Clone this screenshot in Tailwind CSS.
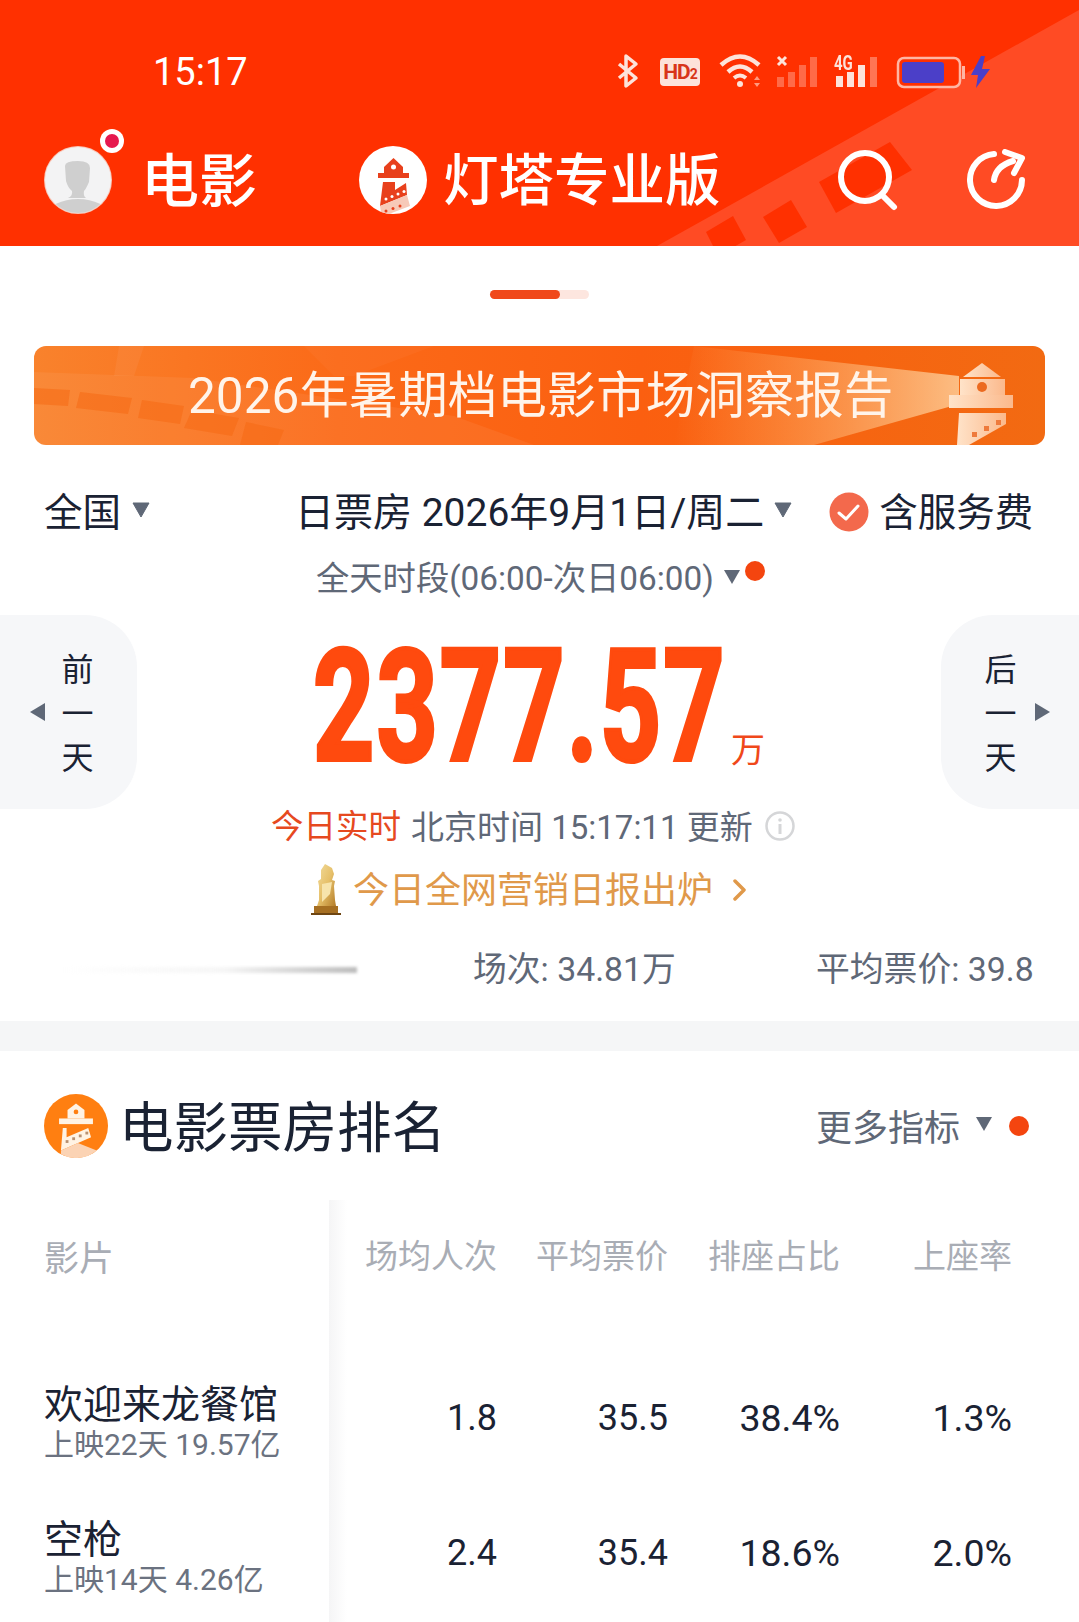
<!doctype html>
<html lang="zh">
<head>
<meta charset="utf-8">
<script src="https://cdn.jsdelivr.net/npm/@tailwindcss/browser@4"></script>
</head>
<body class="bg-white">
<div class="w-[1079px] h-[1622px] overflow-hidden bg-white text-[#1a2233] font-[Roboto,'Noto_Sans_CJK_SC',sans-serif]">

  <!-- Header -->
  <header class="relative h-[246px] bg-[#ff3000] overflow-hidden text-white">
    <svg class="absolute inset-0" width="1079" height="246" viewBox="0 0 1079 246">
      <polygon points="657,246 1079,10 1079,246" fill="#ff4b24"/>
      <polygon points="706,232 733,216 746,240 718,256" fill="#ff3000"/>
      <polygon points="763,217 791,200 807,227 779,243" fill="#ff3000"/>
      <polygon points="819,182 890,142 912,170 836,213" fill="#ff3000"/>
    </svg>
    <div class="relative h-[142px] flex items-center">
      <span class="ml-[153px] pt-[2px] text-[38px] leading-none">15:17</span>
      <svg class="ml-[369px]" width="374" height="40" viewBox="0 0 374 40">
        <!-- bluetooth -->
        <path d="M2 13 L19 27 L9 35 L9 5 L19 13 L2 27" fill="none" stroke="#fde3da" stroke-width="3.500" stroke-linejoin="round"/>
        <!-- wifi -->
        <g fill="none" stroke="#fde3da" transform="translate(3 0)">
          <path d="M101 14 Q120 -3 139 14" stroke-width="4.500"/>
          <path d="M108 21 Q120 10 132 21" stroke-width="4.500"/>
          <path d="M114 27 Q120 22 126 27" stroke-width="4"/>
        </g>
        <circle cx="123" cy="33" r="3" fill="#fde3da"/>
        <path d="M137 29 l3 -4 l3 4z M137 32 l3 4 l3 -4z" fill="#ff9a80"/>
        <!-- signal 1 -->
        <g transform="translate(4 0)">
          <path d="M157 6 l8 8 M165 6 l-8 8" stroke="#fde3da" stroke-width="3"/>
          <rect x="156" y="26" width="7" height="10" fill="#ff6a48"/>
          <rect x="167" y="21" width="7" height="15" fill="#ff6a48"/>
          <rect x="178" y="14" width="7" height="22" fill="#ff6a48"/>
          <rect x="189" y="6" width="7" height="30" fill="#ff6a48"/>
        </g>
        <!-- signal 2 -->
        <g transform="translate(3 0)">
          <rect x="216" y="25" width="7" height="11" fill="#fde3da"/>
          <rect x="227" y="21" width="7" height="15" fill="#fde3da"/>
          <rect x="238" y="14" width="7" height="22" fill="#fde3da"/>
          <rect x="250" y="6" width="7" height="30" fill="#ff7454"/>
        </g>
        <!-- battery -->
        <g transform="translate(3 0)">
          <rect x="278" y="7" width="62" height="29" rx="6" fill="#ff3000" stroke="#ffb6a3" stroke-width="2.500"/>
          <rect x="282" y="11" width="42" height="21" rx="3" fill="#4b3fc8"/>
          <rect x="342" y="15" width="3" height="13" fill="#ffb6a3"/>
          <path d="M361 5 L351 24 L358 24 L356 37 L370 18 L362 18 L365 5z" fill="#4b3fc8"/>
        </g>
      </svg>
    </div>
    <span class="absolute left-[660px] top-[58px] w-[40px] h-[28px] rounded-[4px] bg-[#fde3da] text-[#d8351a] text-[21px] font-bold leading-[28px] text-center tracking-[-1px]">HD<span class="text-[14px]">2</span></span>
    <span class="absolute left-[834px] top-[51px] text-[#fde3da] text-[20px] font-bold leading-[24px] scale-x-75 origin-left">4G</span>
    <nav class="relative h-[76px] flex items-center">
      <div class="relative ml-[44px] w-[68px] h-[68px] shrink-0">
        <svg width="68" height="68" viewBox="0 0 68 68">
          <defs><clipPath id="av"><circle cx="34" cy="34" r="33"/></clipPath></defs>
          <circle cx="34" cy="34" r="34" fill="#f8c9bb"/>
          <circle cx="34" cy="34" r="33" fill="#f3f3f4"/>
          <g clip-path="url(#av)" fill="#cfcfcf">
            <path d="M21 20 Q21 15 34 15 Q46 15 46 22 L45 36 Q42 43 40 45 Q39 50 42 52 L24 52 Q29 50 28 45 Q24 42 22 35z"/>
            <ellipse cx="34" cy="68" rx="30" ry="15"/>
          </g>
        </svg>
        <span class="absolute left-[56px] top-[-17px] w-[24px] h-[24px] rounded-full bg-white flex items-center justify-center"><span class="w-[14px] h-[14px] rounded-full bg-[#e6194f]"></span></span>
      </div>
      <span class="ml-[29px] pt-[4px] text-[58px] leading-none font-medium">电影</span>
      <svg class="ml-[102px] shrink-0" width="68" height="68" viewBox="0 0 68 68">
        <circle cx="34" cy="34" r="34" fill="#fff"/>
        <path d="M34.500 12 L44 21 L44 27 L25 27 L25 21z" fill="#e8401c"/>
        <circle cx="34.500" cy="21" r="2.500" fill="#fff"/>
        <rect x="19" y="27" width="31" height="5" fill="#e8401c"/>
        <path d="M24 36 L36 36 L36 44 L47 37 L48 49 L21 60z" fill="#e8401c"/>
        <path d="M21 60 L48 49 L51 60 L30 68 L22 66z" fill="#f7c9b8"/>
        <g fill="#fff"><circle cx="27" cy="53" r="1.500"/><circle cx="33" cy="50.500" r="1.500"/><circle cx="39" cy="48" r="1.500"/><circle cx="45" cy="45.500" r="1.500"/></g>
        <g fill="#e8401c"><circle cx="27" cy="65" r="1.500"/><circle cx="34" cy="62.500" r="1.500"/><circle cx="41" cy="60" r="1.500"/></g>
      </svg>
      <span class="ml-[16px] pt-[4px] text-[55.500px] leading-none font-medium whitespace-nowrap">灯塔专业版</span>
      <svg class="ml-[117px] shrink-0" width="60" height="62" viewBox="0 0 60 62" fill="none" stroke="#fff" stroke-width="6" stroke-linecap="round">
        <circle cx="27" cy="28" r="24"/>
        <path d="M44 46 L56 58"/>
      </svg>
      <svg class="ml-[69px] shrink-0" width="60" height="62" viewBox="0 0 60 62" fill="none" stroke="#fff" stroke-width="6" stroke-linecap="round" stroke-linejoin="round">
        <path d="M27 5 A26 26 0 1 0 55 31"/>
        <path d="M27 31 Q29 17 46 12"/>
        <path d="M38 3 L55 9 L47 24" />
      </svg>
    </nav>
  </header>

  <!-- Indicator -->
  <div class="h-[100px] pt-[44px] flex justify-center">
    <div class="w-[99px] h-[9px] rounded-full bg-[#fde6df]"><div class="w-[70px] h-[9px] rounded-full bg-[#f0481a]"></div></div>
  </div>

  <!-- Banner -->
  <div class="relative ml-[34px] w-[1011px] h-[99px] rounded-[12px] overflow-hidden bg-[linear-gradient(90deg,#f9822c_0%,#fb6a18_30%,#fb5f10_60%,#f26a12_100%)] flex items-center">
    <svg class="absolute inset-0" width="1011" height="99" viewBox="0 0 1011 99">
      <defs>
        <linearGradient id="beam" x1="1" x2="0" y1="0" y2="0"><stop offset="0" stop-color="#ffd9a8" stop-opacity=".75"/><stop offset=".6" stop-color="#ffb06a" stop-opacity=".4"/><stop offset="1" stop-color="#ffb06a" stop-opacity="0"/></linearGradient>
        <linearGradient id="tower" x1="0" x2="1" y1="0" y2="0"><stop offset="0" stop-color="#ffe3c9"/><stop offset="1" stop-color="#fbb98c"/></linearGradient>
      </defs>
      <polygon points="0,26 160,32 420,70 500,99 0,99" fill="#fff" opacity=".06"/>
      <g fill="#f66a14" opacity=".55">
        <polygon points="0,42 36,44 34,60 0,58"/>
        <polygon points="46,46 98,52 94,68 42,62"/>
        <polygon points="108,54 150,60 146,78 104,72"/>
        <polygon points="158,64 205,72 198,90 150,82"/>
        <polygon points="212,76 250,84 244,99 206,99"/>
      </g>
      <polygon points="85,0 110,0 100,30 80,30" fill="#fff" opacity=".05"/>
      <polygon points="270,0 400,0 320,30 300,30" fill="#fff" opacity=".03"/>
      <polygon points="925,30 660,0 640,99 780,99 925,58" fill="url(#beam)"/>
      <g fill="url(#tower)">
        <path d="M948 17 L967 31 L929 31z"/>
        <path d="M926 33 L971 33 L971 50 L926 50z"/>
        <rect x="915" y="49" width="64" height="13"/>
        <path d="M925 67 L972 67 L972 78 L935 99 L923 99z"/>
      </g>
      <circle cx="948" cy="41" r="5" fill="#ec6a20"/>
      <g fill="#ee7a3c"><rect x="962" y="74" width="5" height="5"/><rect x="950" y="80" width="5" height="5"/><rect x="938" y="86" width="5" height="5"/></g>
    </svg>
    <span class="relative ml-[154px] pt-[2px] text-[49.500px] leading-none text-[#fff4ea] whitespace-nowrap">2026年暑期档电影市场洞察报告</span>
  </div>

  <!-- Filter row -->
  <div class="mt-[35px] h-[66px] pl-[44px] flex items-center">
    <span class="text-[38.500px] leading-none">全国</span>
    <svg class="ml-[11px] mb-[6px]" width="18" height="16" viewBox="0 0 18 16"><path d="M1 1 H17 L9 15z" fill="#5f6877" stroke="#5f6877" stroke-linejoin="round"/></svg>
    <span class="ml-[145px] text-[39px] leading-none whitespace-nowrap">日票房 2026年9月1日/周二</span>
    <svg class="ml-[10px] mb-[6px]" width="18" height="16" viewBox="0 0 18 16"><path d="M1 1 H17 L9 15z" fill="#5f6877" stroke="#5f6877" stroke-linejoin="round"/></svg>
    <svg class="ml-[37px] mb-[3px]" width="40" height="40" viewBox="0 0 40 40"><circle cx="20" cy="20" r="19.500" fill="#f3694c"/><path d="M10 21 L17 27 L29 14" fill="none" stroke="#fff" stroke-width="3" stroke-linecap="round" stroke-linejoin="round"/></svg>
    <span class="ml-[10px] text-[38.500px] leading-none">含服务费</span>
  </div>

  <!-- Time range -->
  <div class="h-[44px] pl-[316px] mt-[11px] flex items-center text-[#5f6877]">
    <span class="text-[33.300px] leading-none whitespace-nowrap">全天时段(06:00-次日06:00)</span>
    <svg class="ml-[9px] mb-[4px]" width="18" height="16" viewBox="0 0 18 16"><path d="M1 1 H17 L9 15z" fill="#5f6877"/></svg>
    <span class="ml-[4px] mb-[16px] w-[20px] h-[20px] rounded-full bg-[#f4450f]"></span>
  </div>

  <!-- Box office -->
  <div class="mt-[14px] h-[194px] flex">
    <div class="w-[137px] h-[194px] rounded-r-[52px] bg-[#f6f7f9] flex items-center shrink-0">
      <svg class="ml-[30px]" width="15" height="18" viewBox="0 0 15 18"><path d="M15 0 V18 L0 9z" fill="#5f6877"/></svg>
      <div class="ml-[16px] pt-[4px] w-[33px] flex flex-col items-center text-[32px] leading-[44px]"><span>前</span><span>一</span><span>天</span></div>
    </div>
    <div class="ml-[176px] w-[414px] h-[194px] shrink-0">
      <div class="mt-[-14px] whitespace-nowrap origin-left scale-x-[0.69] text-[155px] leading-[212px] font-bold text-[#ff4a0e] tracking-[3px] [-webkit-text-stroke:4px_#ff4a0e]">2377.57</div>
    </div>
    <span class="ml-[4px] mt-[118px] text-[34px] leading-none text-[#f0481a]">万</span>
    <div class="ml-auto w-[138px] h-[194px] rounded-l-[52px] bg-[#f6f7f9] flex items-center shrink-0">
      <div class="ml-[43px] pt-[4px] w-[33px] flex flex-col items-center text-[32px] leading-[44px]"><span>后</span><span>一</span><span>天</span></div>
      <svg class="ml-[18px]" width="15" height="18" viewBox="0 0 15 18"><path d="M0 0 V18 L15 9z" fill="#5f6877"/></svg>
    </div>
  </div>

  <!-- Update line -->
  <div class="h-[36px] pl-[271px] flex items-center text-[33px] leading-none whitespace-nowrap text-[#5f6877]">
    <span class="text-[#e6491f] text-[32.500px]">今日实时</span>
    <span class="ml-[10px]">北京时间 15:17:11 更新</span>
    <svg class="ml-[12px] mb-[2px]" width="30" height="30" viewBox="0 0 30 30"><circle cx="15" cy="15" r="13.500" fill="none" stroke="#d5d6d8" stroke-width="2.500"/><circle cx="15" cy="9" r="1.800" fill="#d5d6d8"/><rect x="13.500" y="13" width="3" height="10" fill="#d5d6d8"/></svg>
  </div>

  <!-- Marketing line -->
  <div class="mt-[19px] h-[52px] pl-[310px] flex items-center">
    <svg width="32" height="52" viewBox="0 0 32 52">
      <defs><linearGradient id="gold" x1="0" x2="1" y1="0" y2="1"><stop offset="0" stop-color="#f2dc9c"/><stop offset=".5" stop-color="#e6c06a"/><stop offset="1" stop-color="#b47c28"/></linearGradient></defs>
      <path d="M15 0 L22 4 L24 10 L22 16 L25 17 L24 22 L25 36 L26 42 L7 42 L9 36 L9 22 L8 17 L11 15 L11 6z" fill="url(#gold)"/>
      <path d="M12 20 L22 18 L20 30 L12 38z" fill="#f7e4ac"/>
      <rect x="4" y="42" width="24" height="7" fill="#a66f22"/>
      <rect x="1" y="49" width="30" height="2" fill="#6e4512"/>
    </svg>
    <span class="ml-[11px] pt-[2px] text-[36px] leading-none text-[#e0994a] whitespace-nowrap">今日全网营销日报出炉</span>
    <svg class="ml-[20px]" width="14" height="22" viewBox="0 0 14 22" fill="none" stroke="#e0994a" stroke-width="3.500" stroke-linecap="round" stroke-linejoin="round"><path d="M2 2 L11 11 L2 20"/></svg>
  </div>

  <!-- Stats -->
  <div class="mt-[29px] h-[50px] flex items-center text-[33.800px] leading-none text-[#5f6877] whitespace-nowrap">
    <div class="ml-[62px] w-[295px] h-[6px] bg-[linear-gradient(90deg,transparent_0%,#f6f6f6_55%,#bcbcbc_100%)] blur-[1.500px] shrink-0"></div>
    <span class="ml-[116px] w-[343px] shrink-0">场次: 34.81万</span>
    <span>平均票价: 39.8</span>
  </div>

  <div class="mt-[26px] h-[30px] bg-[#f5f6f7]"></div>

  <!-- Section head -->
  <div class="mt-[43px] h-[64px] pl-[44px] flex items-center">
    <svg width="64" height="64" viewBox="0 0 68 68">
      <circle cx="34" cy="34" r="34" fill="#ff7f11"/>
      <path d="M34 10 L43 17 L43 26 L25 26 L25 17z" fill="#fff3e4"/>
      <circle cx="34" cy="19" r="2.500" fill="#ff7f11"/>
      <rect x="16" y="26" width="36" height="6" fill="#fff3e4"/>
      <path d="M20 36 L24 36 L24 46 L47 36 L50 46 L18 60z" fill="#fff3e4"/>
      <g fill="#b89070"><rect x="23" y="49" width="3" height="3"/><rect x="30" y="46" width="3" height="3"/><rect x="37" y="43" width="3" height="3"/><rect x="44" y="40" width="3" height="3"/></g>
      <path d="M18 60 L36 52 L56 60 A34 34 0 0 1 18 64z" fill="#fbd3b4"/>
    </svg>
    <span class="ml-[11px] pt-[5px] text-[54.500px] leading-none whitespace-nowrap">电影票房排名</span>
    <span class="ml-[370px] pt-[5px] text-[36px] leading-none text-[#5f6877] whitespace-nowrap">更多指标</span>
    <svg class="ml-[15px] mb-[4px]" width="18" height="16" viewBox="0 0 18 16"><path d="M1 1 H17 L9 15z" fill="#5f6877"/></svg>
    <span class="ml-[16px] w-[20px] h-[20px] rounded-full bg-[#f4450f]"></span>
  </div>

  <!-- Table -->
  <div class="relative mt-[42px]">
    <div class="absolute left-[329px] top-0 w-[18px] h-[422px] bg-[linear-gradient(90deg,#f5f5f6,#ffffff)]"></div>
    <div class="relative grid grid-cols-[329px_168px_171px_172px_172px] h-[157px] text-[33px] leading-[44px] text-[#a9adb5] items-start">
      <span class="pl-[44px] pt-[38px] text-[35px]">影片</span>
      <span class="pt-[35px] text-right">场均人次</span>
      <span class="pt-[35px] text-right">平均票价</span>
      <span class="pt-[35px] text-right">排座占比</span>
      <span class="pt-[35px] text-right">上座率</span>
    </div>
    <div class="relative grid grid-cols-[329px_168px_171px_172px_172px] h-[135px] text-[36px] leading-[44px] items-start">
      <div class="pl-[44px] pt-[24px] flex flex-col">
        <span class="text-[39px] leading-[48px]">欢迎来龙餐馆</span>
        <span class="mt-[-4px] text-[30px] leading-[40px] text-[#6b7280] whitespace-nowrap">上映22天 19.57亿</span>
      </div>
      <span class="pt-[39px] text-right">1.8</span>
      <span class="pt-[39px] text-right">35.5</span>
      <span class="pt-[39px] text-right text-[37.500px]">38.4%</span>
      <span class="pt-[39px] text-right text-[37.500px]">1.3%</span>
    </div>
    <div class="relative grid grid-cols-[329px_168px_171px_172px_172px] h-[130px] text-[36px] leading-[44px] items-start">
      <div class="pl-[44px] pt-[24px] flex flex-col">
        <span class="text-[39px] leading-[48px]">空枪</span>
        <span class="mt-[-4px] text-[30px] leading-[40px] text-[#6b7280] whitespace-nowrap">上映14天 4.26亿</span>
      </div>
      <span class="pt-[39px] text-right">2.4</span>
      <span class="pt-[39px] text-right">35.4</span>
      <span class="pt-[39px] text-right text-[37.500px]">18.6%</span>
      <span class="pt-[39px] text-right text-[37.500px]">2.0%</span>
    </div>
  </div>
</div>
</body>
</html>
